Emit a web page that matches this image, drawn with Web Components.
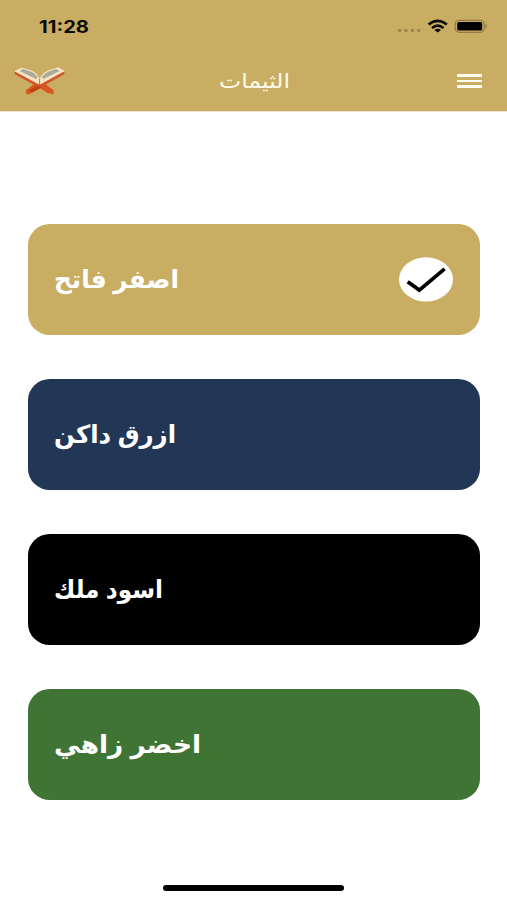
<!DOCTYPE html>
<html lang="ar">
<head>
<meta charset="utf-8">
<title>الثيمات</title>
<style>
html,body{margin:0;height:100%;background:#fff;overflow:hidden}
</style>
</head>
<body>
<theme-screen></theme-screen>
<script>
const define=(name,html,ready)=>{
  const t=document.createElement('template');t.innerHTML=html;
  customElements.define(name,class extends HTMLElement{
    connectedCallback(){
      if(this.shadowRoot)return;
      this.attachShadow({mode:'open'}).append(t.content.cloneNode(true));
      if(ready)ready(this,this.shadowRoot);
    }
  });
};

// One line of text scaled horizontally to the width given in the "width" attribute.
define('fit-text',`<style>
:host{display:block;white-space:nowrap;line-height:1;direction:ltr}
span{display:inline-block;transform-origin:0 50%}
</style><span><slot></slot></span>`,(el,root)=>{
  const w=+el.getAttribute('width'),s=root.querySelector('span');
  el.style.width=w+'px';
  s.style.transform='scaleX('+w/s.getBoundingClientRect().width+')';
});

define('status-bar',`<style>
:host{display:flex;height:52px;justify-content:space-between;box-sizing:border-box;padding:0 19px 0 39px;color:#0d0a05}
fit-text{font:700 17px/20px Inter,"Liberation Sans",sans-serif;padding-top:17px}
svg{display:block}
</style>
<fit-text width="50">11:28</fit-text>
<svg width="92" height="52" viewBox="396 0 92 52">
<g fill="#9b8350"><circle cx="399.6" cy="30.5" r="1.7"/><circle cx="406" cy="30.5" r="1.7"/><circle cx="412.3" cy="30.5" r="1.7"/><circle cx="418.7" cy="30.5" r="1.7"/></g>
<g fill="none" stroke="#0d0a05" stroke-width="2.6"><path d="M428.6 24.6Q437.6 17.2 446.8 24.6"/><path d="M432 28Q437.7 23.4 443.5 28"/></g>
<path d="M434.4 29.9Q437.7 27.4 441 29.9L437.7 32.6Z" fill="#0d0a05"/>
<rect x="455.2" y="20.3" width="29" height="12" rx="3.6" fill="none" stroke="#856d3b"/>
<rect x="457.2" y="22.1" width="25" height="8.4" rx="1.6" fill="#000"/>
<path d="M485.6 23.8Q488 26.3 485.6 28.8Z" fill="#856d3b"/>
</svg>`);

define('quran-icon',`<style>:host{display:block}svg{display:block}</style>
<svg width="52" height="32" viewBox="12 65 52 32">
<path d="M35.5 82L25 90.3L25.3 94Q30 94.8 34 91L39 88.2L44 91.2Q48 94.8 52.6 93.7V90.3L41.5 82Z" fill="#d9561f"/>
<path d="M27 91L36.5 86L41 87.2L32 92Z" fill="#bd4015"/>
<path d="M13 71.6L14.3 74.5L37 87L38.7 84.5L40.3 87L62.8 74.5L64 71.3L39 79Z" fill="#cf562d"/>
<path d="M13.3 71.3L20.5 67.4L30 70.2Q36 72.5 38.6 79Q41.5 72.5 47.5 70.2L57.2 67.3L63.8 71.1L39.6 84.2H37.6Z" fill="#f4e3c4"/>
<path d="M18.8 71L22 68.9L30.5 71.7Q34.5 73.5 36.6 77.2L35 79Z" fill="#aaaa9a"/>
<path d="M58.5 71L55.3 68.9L47 71.7Q43 73.5 40.8 77.2L42.4 79Z" fill="#aaaa9a"/>
<path d="M38.6 79V84.5" stroke="#a55b39" stroke-width=".8"/>
</svg>`);

define('menu-icon',`<style>:host{display:flex;flex-direction:column;gap:3px;width:25px}i{height:2.6px;background:#fffdf2}</style><i></i><i></i><i></i>`);

define('app-header',`<style>
:host{display:block;height:112px;background:#c9ad62;border-bottom:1px solid #eee4cb;box-sizing:border-box}
nav{display:grid;grid-template-columns:52px 1fr 25px;align-items:center;height:58px;padding:0 25px 0 13px}
.t{display:flex;justify-content:center;padding:0 14px 0 0}
fit-text{font:400 20px/30px "DejaVu Sans",sans-serif;color:#fffbea}
</style>
<status-bar></status-bar>
<nav><quran-icon></quran-icon><div class="t"><fit-text width="71">الثيمات</fit-text></div><menu-icon></menu-icon></nav>`);

define('check-badge',`<style>:host,svg{display:block}</style>
<svg width="54" height="45" viewBox="0 0 54 45"><ellipse cx="27" cy="22.4" rx="27" ry="22.2" fill="#fff"/><path d="M8.7 24.7L20.3 33.1L45.6 11.8" fill="none" stroke="#000" stroke-width="3.7"/></svg>`);

define('theme-card',`<style>
:host{display:flex;align-items:center;justify-content:space-between;box-sizing:border-box;height:111px;padding:0 27px 0 26px;border-radius:22px/21px;background:var(--c);color:#fff}
::slotted(fit-text){font:700 25px/36px "DejaVu Sans",sans-serif;word-spacing:-2px}
</style><slot></slot><slot name="mark"></slot>`);

define('theme-screen',`<style>
:host{display:flex;flex-direction:column;height:900px;width:507px;background:#fff}
main{display:flex;flex-direction:column;gap:44px;padding:112px 27px 0 28px;flex:1}
footer{height:15px;display:flex;justify-content:center;align-items:flex-start}
footer i{width:181px;height:5.5px;border-radius:3px;background:#000}
</style>
<app-header></app-header>
<main>
<theme-card style="--c:#c9ad62"><fit-text width="125">اصفر فاتح</fit-text><check-badge slot="mark"></check-badge></theme-card>
<theme-card style="--c:#223656"><fit-text width="122">ازرق داكن</fit-text></theme-card>
<theme-card style="--c:#000"><fit-text width="109">اسود ملك</fit-text></theme-card>
<theme-card style="--c:#407435"><fit-text width="147">اخضر زاهي</fit-text></theme-card>
</main>
<footer><i></i></footer>`);
</script>
</body>
</html>
